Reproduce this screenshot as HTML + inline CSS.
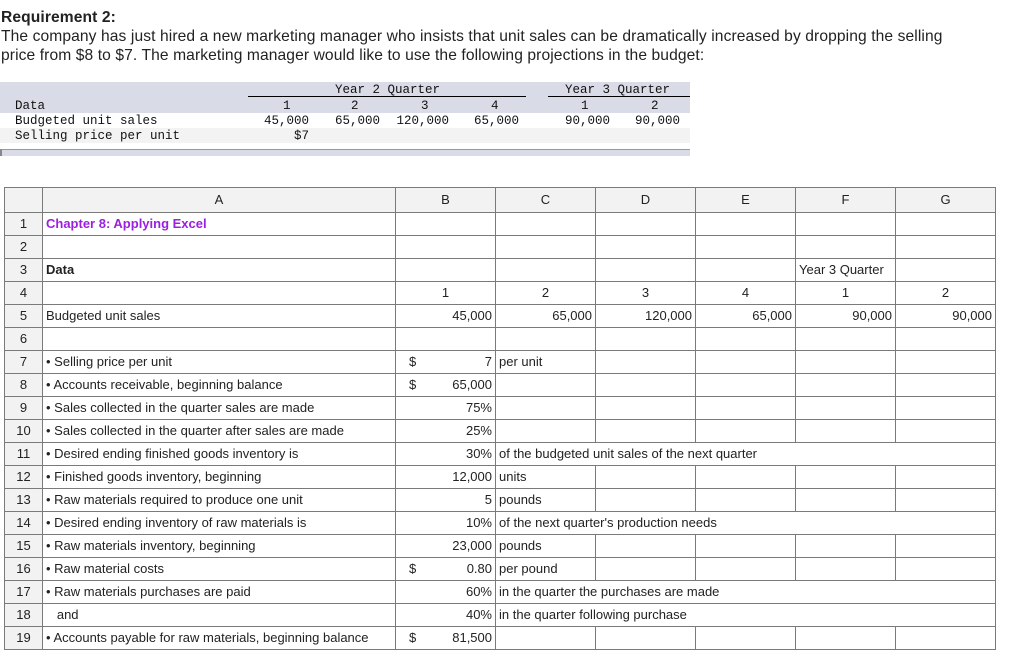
<!DOCTYPE html>
<html><head><meta charset="utf-8"><style>
body{margin:0;width:1028px;height:669px;background:#fff;font-family:"Liberation Sans",Arial,sans-serif;color:#222;position:relative;overflow:hidden}
.intro{position:absolute;left:1px;top:8px;font-size:15.6px;line-height:19px;color:#222;width:950px;letter-spacing:0.1px}
.intro b{font-weight:bold}
.box{position:absolute;left:0;top:82px;width:690px;height:74px;font-family:"Liberation Mono",monospace;font-size:12.5px;color:#111}
.box .g{position:absolute;left:0;width:690px;background:#d9dce7}
.box span{position:absolute;white-space:pre}
.box span.r{text-align:right;width:80px}
table{position:absolute;left:4px;top:187px;border-collapse:collapse;table-layout:fixed;font-size:13px;color:#222}
td{border:1px solid #7a7a7a;height:22px;padding:0 3px;white-space:nowrap;overflow:visible;line-height:22px}
tr.h td{background:#f2f2f2;height:24px;text-align:center}
td.n{background:#f2f2f2;text-align:center;padding:0}
td.rt{text-align:right}
.dl{float:left;margin-left:10px}
</style></head><body>
<div class="intro"><b>Requirement 2:</b><br>The company has just hired a new marketing manager who insists that unit sales can be dramatically increased by dropping the selling<br>price from $8 to $7. The marketing manager would like to use the following projections in the budget:</div>
<div class="box">
<div class="g" style="top:0;height:31px"></div>
<div style="position:absolute;left:0;top:46px;width:690px;height:15px;background:#f3f3f3"></div>
<div style="position:absolute;left:0;top:67px;width:690px;height:7px;background:#d9dce7;border-left:2px solid #888;box-sizing:border-box;border-top:1px solid #999"></div>
<span style="left:335px;top:1px">Year 2 Quarter</span>
<div style="position:absolute;left:248px;top:14px;width:278px;height:1px;background:#000"></div>
<span style="left:565px;top:1px">Year 3 Quarter</span>
<div style="position:absolute;left:548px;top:14px;width:142px;height:1px;background:#000"></div>
<span style="left:15px;top:17px">Data</span>
<span style="left:283px;top:17px">1</span><span style="left:351px;top:17px">2</span><span style="left:421px;top:17px">3</span><span style="left:491px;top:17px">4</span><span style="left:581px;top:17px">1</span><span style="left:651px;top:17px">2</span>
<span style="left:15px;top:32px">Budgeted unit sales</span>
<span class="r" style="left:229px;top:32px">45,000</span><span class="r" style="left:300px;top:32px">65,000</span><span class="r" style="left:369px;top:32px">120,000</span><span class="r" style="left:439px;top:32px">65,000</span><span class="r" style="left:530px;top:32px">90,000</span><span class="r" style="left:600px;top:32px">90,000</span>
<span style="left:15px;top:47px">Selling price per unit</span>
<span class="r" style="left:229px;top:47px">$7</span>
</div>
<table>
<colgroup><col style="width:38px"><col style="width:353px"><col style="width:100px"><col style="width:100px"><col style="width:100px"><col style="width:100px"><col style="width:100px"><col style="width:100px"></colgroup>
<tr class="h"><td></td><td>A</td><td>B</td><td>C</td><td>D</td><td>E</td><td>F</td><td>G</td></tr>
<tr><td class="n">1</td><td style="color:#9b1fe0;font-weight:bold">Chapter 8: Applying Excel</td><td></td><td></td><td></td><td></td><td></td><td></td></tr>
<tr><td class="n">2</td><td></td><td></td><td></td><td></td><td></td><td></td><td></td></tr>
<tr><td class="n">3</td><td style="font-weight:bold">Data</td><td></td><td></td><td></td><td></td><td>Year 3 Quarter</td><td></td></tr>
<tr><td class="n">4</td><td></td><td style="text-align:center">1</td><td style="text-align:center">2</td><td style="text-align:center">3</td><td style="text-align:center">4</td><td style="text-align:center">1</td><td style="text-align:center">2</td></tr>
<tr><td class="n">5</td><td>Budgeted unit sales</td><td class="rt">45,000</td><td class="rt">65,000</td><td class="rt">120,000</td><td class="rt">65,000</td><td class="rt">90,000</td><td class="rt">90,000</td></tr>
<tr><td class="n">6</td><td></td><td></td><td></td><td></td><td></td><td></td><td></td></tr>
<tr><td class="n">7</td><td>• Selling price per unit</td><td class="rt"><span class="dl">$</span>7</td><td>per unit</td><td></td><td></td><td></td><td></td></tr>
<tr><td class="n">8</td><td>• Accounts receivable, beginning balance</td><td class="rt"><span class="dl">$</span>65,000</td><td></td><td></td><td></td><td></td><td></td></tr>
<tr><td class="n">9</td><td>• Sales collected in the quarter sales are made</td><td class="rt">75%</td><td></td><td></td><td></td><td></td><td></td></tr>
<tr><td class="n">10</td><td>• Sales collected in the quarter after sales are made</td><td class="rt">25%</td><td></td><td></td><td></td><td></td><td></td></tr>
<tr><td class="n">11</td><td>• Desired ending finished goods inventory is</td><td class="rt">30%</td><td colspan="5">of the budgeted unit sales of the next quarter</td></tr>
<tr><td class="n">12</td><td>• Finished goods inventory, beginning</td><td class="rt">12,000</td><td>units</td><td></td><td></td><td></td><td></td></tr>
<tr><td class="n">13</td><td>• Raw materials required to produce one unit</td><td class="rt">5</td><td>pounds</td><td></td><td></td><td></td><td></td></tr>
<tr><td class="n">14</td><td>• Desired ending inventory of raw materials is</td><td class="rt">10%</td><td colspan="5">of the next quarter's production needs</td></tr>
<tr><td class="n">15</td><td>• Raw materials inventory, beginning</td><td class="rt">23,000</td><td>pounds</td><td></td><td></td><td></td><td></td></tr>
<tr><td class="n">16</td><td>• Raw material costs</td><td class="rt"><span class="dl">$</span>0.80</td><td>per pound</td><td></td><td></td><td></td><td></td></tr>
<tr><td class="n">17</td><td>• Raw materials purchases are paid</td><td class="rt">60%</td><td colspan="5">in the quarter the purchases are made</td></tr>
<tr><td class="n">18</td><td>&nbsp;&nbsp;&nbsp;and</td><td class="rt">40%</td><td colspan="5">in the quarter following purchase</td></tr>
<tr><td class="n">19</td><td>• Accounts payable for raw materials, beginning balance</td><td class="rt"><span class="dl">$</span>81,500</td><td></td><td></td><td></td><td></td><td></td></tr>
</table>
</body></html>
